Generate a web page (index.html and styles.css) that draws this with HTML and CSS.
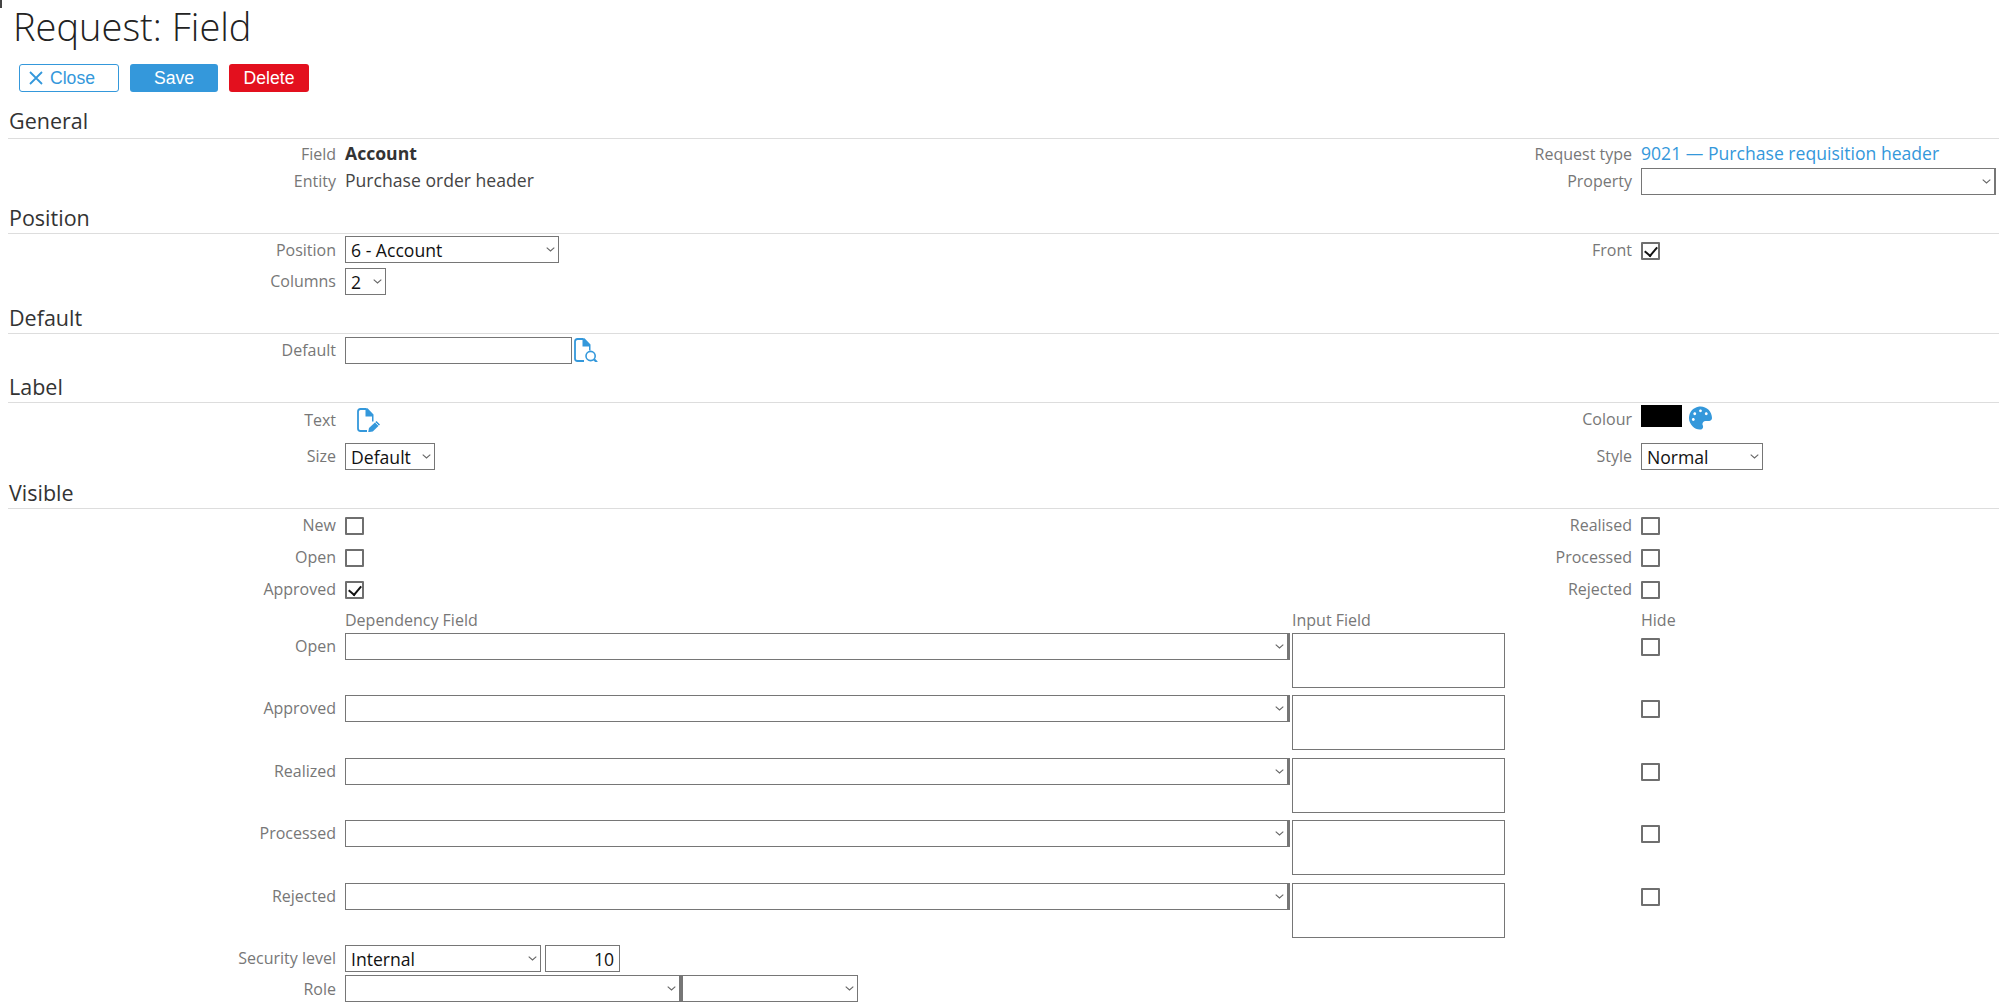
FILE: index.html
```html
<!DOCTYPE html>
<html lang="en">
<head>
<meta charset="utf-8">
<title>Request: Field</title>
<link rel="stylesheet" href="styles.css">
</head>
<body>
<h1 class="title">Request: Field</h1>
<div class="toolbar">
  <button class="btn btn-close" type="button">
    <svg class="x-icon" viewBox="0 0 14 14" width="14" height="14"><path d="M1 1 13 13M13 1 1 13" fill="none" stroke="#3498db" stroke-width="1.8"/></svg>
    <span>Close</span>
  </button>
  <button class="btn btn-save" type="button">Save</button>
  <button class="btn btn-delete" type="button">Delete</button>
</div>

<h2 class="section first">General</h2>
<div class="row row-field">
  <label class="lbl">Field</label><div class="val strong">Account</div>
  <label class="lbl">Request type</label><div class="val"><a class="link" href="#">9021 — Purchase requisition header</a></div>
</div>
<div class="row row-entity">
  <label class="lbl pad1">Entity</label><div class="val">Purchase order header</div>
  <label class="lbl pad1">Property</label><div class="val"><select class="sel w-property thick2"><option></option></select></div>
</div>

<h2 class="section">Position</h2>
<div class="row row-position">
  <label class="lbl pad2">Position</label><div class="val"><select class="sel w-position"><option>6 - Account</option></select></div>
  <label class="lbl pad2">Front</label><div class="val cbcell"><input class="chk" type="checkbox" checked></div>
</div>
<div class="row row-columns">
  <label class="lbl pad1">Columns</label><div class="val"><select class="sel w-columns"><option>2</option></select></div>
</div>

<h2 class="section">Default</h2>
<div class="row row-default">
  <label class="lbl pad1">Default</label>
  <div class="val inline">
    <input class="txt w-default" type="text">
    <svg class="doc-search" viewBox="0 0 24 24" width="24" height="24">
      <path d="M9 1H3.5Q1 1 1 3.5V20.5Q1 23 3.5 23H10" fill="none" stroke="#3498db" stroke-width="1.8"/>
      <path d="M8.5 .3H10.5L16.5 6.5V12.5H15V8.5H8.5Z" fill="#3498db"/>
      <circle cx="16.6" cy="18" r="4.6" fill="none" stroke="#3498db" stroke-width="1.6"/>
      <path d="M20 21.4 23 24.2" stroke="#3498db" stroke-width="2.2"/>
    </svg>
  </div>
</div>

<h2 class="section">Label</h2>
<div class="row row-text">
  <label class="lbl pad3">Text</label>
  <div class="val">
    <svg class="doc-edit" viewBox="0 0 24 24" width="24" height="24">
      <path d="M9 1H3.5Q1 1 1 3.5V20.5Q1 23 3.5 23H10" fill="none" stroke="#3498db" stroke-width="1.8"/>
      <path d="M8.5 .3H10.5L16.5 6.5V13.5H15V8.5H8.5Z" fill="#3498db"/>
      <path d="M12 20 19.5 13 23 16.5 15.8 23.4 11.2 24.2Z" fill="#3498db"/>
      <path d="M18.2 14.3 21.7 17.8" stroke="#fff" stroke-width=".9"/>
    </svg>
  </div>
  <label class="lbl pad2">Colour</label>
  <div class="val inline colourcell">
    <span class="swatch"></span>
    <svg class="palette" viewBox="0 0 512 512" width="23" height="24"><path fill="#3498db" d="M204.3 5C104.9 24.4 24.8 104.3 5.2 203.4c-37 187 131.7 326.4 258.8 306.7 41.2-6.4 61.4-54.6 42.5-91.7-23.1-45.4 9.9-98.4 60.9-98.4h79.7c35.8 0 64.8-29.6 64.9-65.3C511.5 97.1 368.1-26.9 204.3 5zM96 320c-17.7 0-32-14.3-32-32s14.3-32 32-32 32 14.3 32 32-14.3 32-32 32zm32-128c-17.7 0-32-14.3-32-32s14.3-32 32-32 32 14.3 32 32-14.3 32-32 32zm128-64c-17.7 0-32-14.3-32-32s14.3-32 32-32 32 14.3 32 32-14.3 32-32 32zm128 64c-17.7 0-32-14.3-32-32s14.3-32 32-32 32 14.3 32 32-14.3 32-32 32z"/></svg>
  </div>
</div>
<div class="row row-size">
  <label class="lbl pad1">Size</label><div class="val"><select class="sel w-size"><option>Default</option></select></div>
  <label class="lbl pad1">Style</label><div class="val"><select class="sel w-style"><option>Normal</option></select></div>
</div>

<h2 class="section">Visible</h2>
<div class="row row-check first-check">
  <label class="lbl">New</label><div class="val cbcell"><input class="chk" type="checkbox"></div>
  <label class="lbl">Realised</label><div class="val cbcell"><input class="chk" type="checkbox"></div>
</div>
<div class="row row-check">
  <label class="lbl">Open</label><div class="val cbcell"><input class="chk" type="checkbox"></div>
  <label class="lbl">Processed</label><div class="val cbcell"><input class="chk" type="checkbox"></div>
</div>
<div class="row row-check last-check">
  <label class="lbl">Approved</label><div class="val cbcell"><input class="chk" type="checkbox" checked></div>
  <label class="lbl">Rejected</label><div class="val cbcell"><input class="chk" type="checkbox"></div>
</div>

<div class="dep dep-head">
  <span></span><span class="lbl-plain">Dependency Field</span><span class="lbl-plain">Input Field</span><span class="lbl-plain hide-head">Hide</span>
</div>
<div class="dep">
  <label class="lbl pad1">Open</label><select class="sel w-dep thick"><option></option></select><textarea class="area"></textarea><input class="chk hide-chk" type="checkbox">
</div>
<div class="dep">
  <label class="lbl pad1">Approved</label><select class="sel w-dep thick"><option></option></select><textarea class="area"></textarea><input class="chk hide-chk" type="checkbox">
</div>
<div class="dep">
  <label class="lbl pad1">Realized</label><select class="sel w-dep thick"><option></option></select><textarea class="area"></textarea><input class="chk hide-chk" type="checkbox">
</div>
<div class="dep">
  <label class="lbl pad1">Processed</label><select class="sel w-dep thick"><option></option></select><textarea class="area"></textarea><input class="chk hide-chk" type="checkbox">
</div>
<div class="dep">
  <label class="lbl pad1">Rejected</label><select class="sel w-dep thick"><option></option></select><textarea class="area"></textarea><input class="chk hide-chk" type="checkbox">
</div>

<div class="row row-security">
  <label class="lbl pad1">Security level</label>
  <div class="val inline"><select class="sel w-security"><option>Internal</option></select><input class="txt w-level" type="text" value="10"></div>
</div>
<div class="row row-role">
  <label class="lbl pad2">Role</label>
  <div class="val inline"><select class="sel w-role thick"><option></option></select><select class="sel w-role2"><option></option></select></div>
</div>
</body>
</html>
```
FILE: styles.css
```css
* { box-sizing: border-box; }
html, body { margin: 0; padding: 0; background: #fff; }
body {
  position: relative;
  padding-left: 8px;
  font-family: "Open Sans", "Liberation Sans", sans-serif;
  font-size: 16px;
  line-height: 24px;
  color: #333;
  overflow: hidden;
  height: 1007px;
}
body::before {
  content: "";
  position: absolute;
  left: 0;
  top: 0;
  width: 2px;
  height: 8px;
  background: #444;
}
.title {
  margin: 0;
  padding-left: 5px;
  height: 52px;
  font-size: 38px;
  line-height: 52px;
  font-weight: 300;
  color: #222;
}
.toolbar {
  display: flex;
  gap: 11px;
  margin-top: 12px;
  padding-left: 11px;
  height: 28px;
}
.btn {
  height: 28px;
  border-radius: 3px;
  border: 1px solid transparent;
  padding: 0;
  font-family: "Liberation Sans", Arial, sans-serif;
  font-size: 17.6px;
  line-height: 26px;
}
.btn-close {
  display: flex;
  align-items: center;
  width: 100px;
  padding-left: 9px;
  gap: 7px;
  background: #fff;
  border-color: #3498db;
  color: #3498db;
}
.btn-save { width: 88px; background: #3498db; color: #fff; }
.btn-delete { width: 80px; background: #e3101e; color: #fff; }

.section {
  margin: 0;
  height: 39px;
  padding-left: 1px;
  padding-top: 9px;
  font-size: 21.5px;
  line-height: 28px;
  font-weight: 400;
  color: #333;
  border-bottom: 1px solid #ddd;
}
.section.first { height: 47px; padding-top: 15px; }

.row {
  display: grid;
  grid-template-columns: 328px 900px 378px 358px;
  column-gap: 9px;
  align-items: start;
}
.lbl { display: block; text-align: right; color: #777; }
.val { min-width: 0; font-size: 17.6px; color: #444; }
.strong { font-weight: 700; color: #333; }
.link { color: #3498db; text-decoration: none; }
.inline { display: flex; align-items: flex-start; }
.pad1 { padding-top: 1px; }
.pad2 { padding-top: 2px; }
.pad3 { padding-top: 3px; }

.row-field { height: 29px; padding-top: 3px; }
.row-field .val { line-height: 22px; }
.row-entity { height: 27px; }
.row-position { height: 34px; padding-top: 2px; }
.row-columns { height: 27px; }
.row-default { height: 30px; padding-top: 3px; }
.row-text { height: 40px; padding-top: 2px; }
.row-size { height: 27px; }
.row-check { height: 31.75px; }
.row-check .lbl { padding-top: 2px; }
.row-check .cbcell { padding-top: 6px; }
.first-check { margin-top: 2px; }
.last-check { height: 32.5px; }
.row-security { margin-top: 0.4px; height: 30px; }
.row-role { height: 28px; }

.sel {
  appearance: none;
  -webkit-appearance: none;
  height: 27px;
  border: 1px solid #767676;
  border-radius: 0;
  background-color: #fff;
  background-image: url("data:image/svg+xml,%3Csvg xmlns='http://www.w3.org/2000/svg' width='9' height='5' viewBox='0 0 9 5'%3E%3Cpath d='M.7.7 4.5 4 8.3.7' fill='none' stroke='%23666' stroke-width='1.1'/%3E%3C/svg%3E");
  background-repeat: no-repeat;
  background-position: right 3px center;
  font-family: "Open Sans", "Liberation Sans", sans-serif;
  font-size: 17.6px;
  line-height: 24px;
  color: #111;
  padding: 0 0 0 5px;
  display: block;
}
.thick { border-right-width: 3px; }
.thick2 { border-right-width: 2px; }
.w-property { width: 355px; }
.w-position { width: 214px; }
.w-columns { width: 41px; }
.w-size { width: 90px; }
.w-style { width: 122px; }
.w-dep { width: 945px; }
.w-security { width: 196px; }
.w-role { width: 337px; }
.w-role2 { width: 176px; }

.txt {
  height: 27px;
  border: 1px solid #767676;
  background: #fff;
  font-family: "Open Sans", "Liberation Sans", sans-serif;
  font-size: 17.6px;
  color: #111;
  padding: 0 4px;
  border-radius: 0;
}
.w-default { width: 227px; }
.w-level { width: 75px; margin-left: 4px; text-align: right; padding-right: 5px; }
.doc-search { margin: 1px 0 0 2px; display: block; }
.doc-edit { margin: 3px 0 0 12px; display: block; }
.colourcell { gap: 7px; }
.swatch { width: 41px; height: 22px; background: #000; display: block; }
.palette { display: block; margin-top: 1px; }

.cbcell { padding-top: 6px; }
.chk {
  appearance: none;
  -webkit-appearance: none;
  width: 19px;
  height: 18px;
  margin: 0;
  border: 2px solid #6f6f6f;
  border-radius: 1px;
  background: #fff;
  position: relative;
  display: block;
}
.chk:checked::after {
  content: "";
  position: absolute;
  left: 4px;
  top: 0;
  width: 6px;
  height: 10px;
  border-right: 2px solid #111;
  border-bottom: 2px solid #111;
  transform: rotate(40deg);
}

.dep {
  display: grid;
  grid-template-columns: 337px 947px 349px 19px;
  align-items: start;
  height: 62.4px;
}
.dep .lbl { padding-right: 9px; }
.dep-head { height: 25px; margin-top: 1px; }
.lbl-plain { color: #777; display: block; }
.hide-head { white-space: nowrap; }
.area {
  width: 213px;
  height: 55px;
  border: 1px solid #767676;
  border-radius: 0;
  display: block;
  resize: none;
  padding: 0;
  background: #fff;
}
.hide-chk { margin-top: 5px; }
```
